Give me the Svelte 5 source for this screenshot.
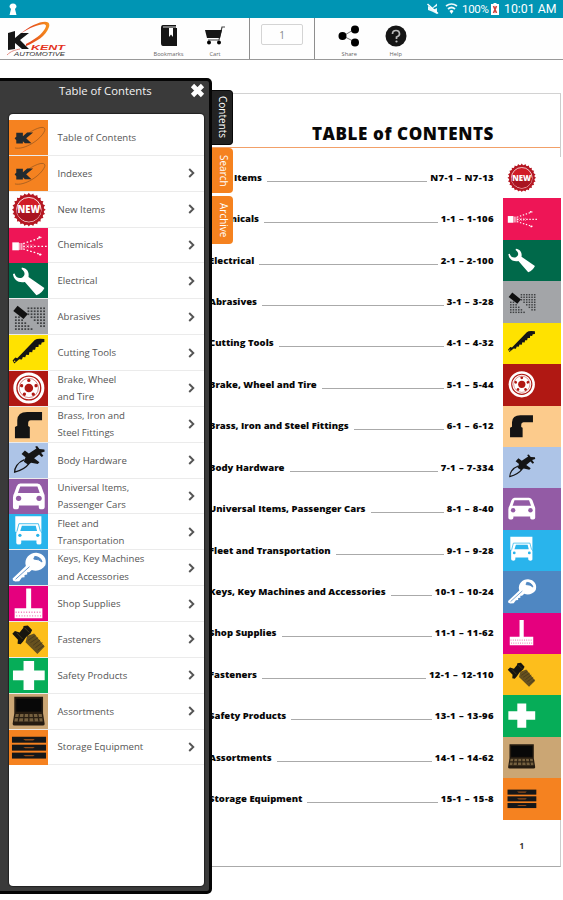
<script>
  const sections = [
    { icon: 'kent', color: '#f58220', menu: ['Table of Contents'] },
    { icon: 'kent', color: '#f58220', menu: ['Indexes'] },
    { icon: 'new', color: '#ffffff', menu: ['New Items'], title: 'New Items', pages: 'N7-1 – N7-13' },
    { icon: 'spray', color: '#ee1556', menu: ['Chemicals'], title: 'Chemicals', pages: '1-1 – 1-106' },
    { icon: 'wrench', color: '#00694a', menu: ['Electrical'], title: 'Electrical', pages: '2-1 – 2-100' },
    { icon: 'abrasive', color: '#a3a5a8', menu: ['Abrasives'], title: 'Abrasives', pages: '3-1 – 3-28' },
    { icon: 'saw', color: '#ffe200', menu: ['Cutting Tools'], title: 'Cutting Tools', pages: '4-1 – 4-32' },
    { icon: 'wheel', color: '#b01813', menu: ['Brake, Wheel', 'and Tire'], title: 'Brake, Wheel and Tire', pages: '5-1 – 5-44' },
    { icon: 'pipe', color: '#fccb8c', menu: ['Brass, Iron and', 'Steel Fittings'], title: 'Brass, Iron and Steel Fittings', pages: '6-1 – 6-12' },
    { icon: 'clip', color: '#adc4e7', menu: ['Body Hardware'], title: 'Body Hardware', pages: '7-1 – 7-334' },
    { icon: 'car', color: '#935ba5', menu: ['Universal Items,', 'Passenger Cars'], title: 'Universal Items, Passenger Cars', pages: '8-1 – 8-40' },
    { icon: 'truck', color: '#29b4ec', menu: ['Fleet and', 'Transportation'], title: 'Fleet and Transportation', pages: '9-1 – 9-28' },
    { icon: 'key', color: '#4f87c2', menu: ['Keys, Key Machines', 'and Accessories'], title: 'Keys, Key Machines and Accessories', pages: '10-1 – 10-24' },
    { icon: 'broom', color: '#e5007e', menu: ['Shop Supplies'], title: 'Shop Supplies', pages: '11-1 – 11-62' },
    { icon: 'bolt', color: '#fdbe1c', menu: ['Fasteners'], title: 'Fasteners', pages: '12-1 – 12-110' },
    { icon: 'cross', color: '#06ad58', menu: ['Safety Products'], title: 'Safety Products', pages: '13-1 – 13-96' },
    { icon: 'case', color: '#cba674', menu: ['Assortments'], title: 'Assortments', pages: '14-1 – 14-62' },
    { icon: 'drawers', color: '#f58220', menu: ['Storage Equipment'], title: 'Storage Equipment', pages: '15-1 – 15-8' }
  ];
  const chapters = sections.filter((s) => s.title);
  const teeth = Array.from({ length: 24 }, (_, i) => i * 15);
  // Grit pattern: two dotted corners around the diagonal block
  const dots = [];
  for (let r = 0; r < 8; r++) {
    for (let c = 0; c < 10; c++) {
      const upper = c >= 4 && c - r >= 2 && r < 7;
      const lower = r >= 3 && c <= r - 2;
      if (upper || lower) dots.push([18 + c * 9.5, 25 + r * 9]);
    }
  }
</script>

{#snippet glyph(name)}
  <svg class="glyph" viewBox="0 0 118 105" aria-hidden="true">
    {#if name === 'kent'}
      <path d="M18 84C46 91 96 60 108 32C113 15 85 19 47 48" fill="none" stroke="#8a5220" stroke-width="2" />
      <path d="M22 38H42V49L55 37H73L52 55L68 70H48L42 64V71H22V61L17 55L22 50Z" fill="#222b30" />
    {:else if name === 'new'}
      {#each teeth as t}
        <path d="M54 10L60 2L66 10Z" transform="rotate({t} 60 53)" fill="#b51722" />
      {/each}
      <circle cx="60" cy="53" r="46" fill="#b51722" />
      <circle cx="60" cy="53" r="37" fill="#d11c27" stroke="#fff" stroke-width="2.6" />
      <path d="M23 53H97A37 36 0 0 1 23 53" fill="#a91420" />
      <text x="60" y="64" text-anchor="middle" textLength="68" lengthAdjust="spacingAndGlyphs" class="newtext">NEW</text>
    {:else if name === 'spray'}
      <path d="M10 43H30V67H10Z" fill="#fff" />
      <path d="M33 45V66M39 45V66" stroke="#fff" stroke-width="3" />
      <path d="M43 47L98 28M43 55H114M43 63L98 80" fill="none" stroke="#fff" stroke-width="4" stroke-dasharray="5 6" />
      <path d="M43 51H78M43 59H78" stroke="#ffb6c9" stroke-width="2" stroke-dasharray="4 3" />
      <circle cx="92" cy="28" r="3.4" fill="#fff" /><circle cx="94" cy="80" r="3.4" fill="#fff" />
    {:else if name === 'wrench'}
      <path d="M39 13C54 15 62 26 59 42L107 75Q100 91 83 97L48 57C29 61 14 51 12 33L17 31C20 43 29 47 39 44C49 39 51 28 38 18Z" fill="#fff" />
    {:else if name === 'abrasive'}
      {#each dots as [x, y]}
        <rect {x} {y} width="5.4" height="5.2" fill="#3f4143" />
      {/each}
      <path d="M26 20L57 45L44 60L13 36Z" fill="#111" />
    {:else if name === 'saw'}
      <path d="M11 77L19 68L25 70L78 15Q85 9 107 12V21L99 22L97 29L90 28L89 36L81 36L79 44L72 44L70 52L62 51L60 60L52 59L49 67L42 66L39 74L31 73L16 86Z" fill="#151515" />
      <circle cx="17" cy="79" r="2.5" fill="#ffe200" />
    {:else if name === 'wheel'}
      <circle cx="60" cy="51" r="47" fill="#fff" />
      <circle cx="60" cy="51" r="36" fill="none" stroke="#b01813" stroke-width="4" />
      <circle cx="60" cy="51" r="29" fill="none" stroke="#b01813" stroke-width="1.5" />
      <circle cx="60" cy="51" r="13" fill="#b01813" />
      {#each [0, 72, 144, 216, 288] as a}
        <circle cx="60" cy="28" r="5" fill="#b01813" transform="rotate({a} 60 51)" />
      {/each}
    {:else if name === 'pipe'}
      <path d="M18 94V60L25 56V40Q26 15 55 15H100V40H66Q58 40 58 49V57L63 60V94Z" fill="#141414" />
    {:else if name === 'clip'}
      <path d="M47 50C25 58 17 76 17 88C31 84 51 75 61 61" fill="none" stroke="#151515" stroke-width="4" />
      <path d="M38 33L48 22L60 31L83 16L79 11L85 9L92 18L107 19L108 25L97 29L104 38L99 42L91 34L76 46L92 58L87 63L67 59L58 65L45 56L50 43Z" fill="#151515" />
    {:else if name === 'car'}
      <path fill-rule="evenodd" d="M34 13H86Q94 13 98 22L105 42Q109 48 108 56V85Q108 91 101 91H96Q90 91 90 85V80H30V85Q30 91 24 91H18Q12 91 12 85V56Q12 48 16 42L23 22Q27 13 34 13ZM34 22L27 42H93L86 22Z" fill="#fff" />
      <circle cx="29" cy="58" r="8" fill="#935ba5" /><circle cx="91" cy="58" r="8" fill="#935ba5" />
    {:else if name === 'truck'}
      <path d="M19 6H98V53H88L83 34H36L31 53H19Z" fill="#fff" />
      <path d="M34 29H86L93 50L98 56V88Q98 92 91 92Q83 92 83 87V80H37V87Q37 92 30 92Q22 92 22 87V56L27 50Z" fill="#fff" />
      <path d="M30 29H89L95 52M30 29L24 52" fill="none" stroke="#29b4ec" stroke-width="2.6" />
      <path d="M39 35H81L85 51H34Z" fill="#29b4ec" />
      <circle cx="33" cy="64" r="5" fill="#29b4ec" /><circle cx="87" cy="64" r="5" fill="#29b4ec" />
    {:else if name === 'key'}
      <path d="M11 86L51 48C44 24 64 7 83 8C104 10 116 26 110 46C101 60 84 66 69 60L61 67L55 67L55 74L47 75L47 82L39 83L31 94L19 95L12 92Z" fill="#fff" />
      <path d="M78 19Q96 20 100 36Q91 27 75 27Z" fill="#4f87c2" stroke="#4f87c2" stroke-width="3" />
      <path d="M20 88L62 50" stroke="#4f87c2" stroke-width="2.6" />
    {:else if name === 'broom'}
      <path d="M52 7H67V67H101V97H17V67H52Z" fill="#fff" />
      <path d="M20 79H99M22 90H99" stroke="#f272b5" stroke-width="4" stroke-dasharray="3 5" />
    {:else if name === 'bolt'}
      <path d="M55 42L76 34L108 74L86 96L50 61Z" fill="#66511f" />
      <path d="M58 55L80 40M65 62L88 47M73 70L94 54M80 77L101 62M87 85L105 71" stroke="#4a3b1b" stroke-width="3" />
      <path d="M10 35L18 27L32 31L43 18L44 12L57 10L70 24L65 34L52 45L42 59L35 67L26 65L27 53Z" fill="#17150f" />
      <path d="M24 33L41 51M47 17L61 31" stroke="#5e4d20" stroke-width="2" />
    {:else if name === 'cross'}
      <path d="M44 9H76V37H108V67H76V96H44V67H12V37H44Z" fill="#fff" />
    {:else if name === 'case'}
      <path d="M16 8H103V58L108 90Q108 95 102 95H17Q11 95 11 90L16 58Z" fill="#251b10" />
      <path d="M22 14H98V53H22Z" fill="#080808" />
      <path d="M20 60H99L102 83H16Z" fill="#75603f" />
      <path d="M32 60L28 83M46 60L44 83M60 60V83M73 60L76 83M87 60L91 83M18 71H101" stroke="#2b2013" stroke-width="4" />
    {:else}
      {#each [20, 44, 68] as y}
        <rect x="9" {y} width="103" height="18" fill="#151719" />
        <path d="M43 {y + 7}H78L73 {y + 11}H49Z" fill="#8f4c1b" />
      {/each}
    {/if}
  </svg>
{/snippet}

<div class="app">
  <header class="status">
    <svg class="keyhole" viewBox="0 0 10 14"><path d="M1.500 5A3.500 3.500 0 1 1 8.500 5L7 7L8.500 13H1.500L3 7Z" fill="#fff" /></svg>
    <div class="indicators">
      <svg width="12" height="12" viewBox="0 0 12 12"><path d="M1 3L5 5L10 0.500V11L5 8.500L1 7Z" fill="#e8f7fa" /><path d="M6 6L12 3" stroke="#0095b4" stroke-width="1.600" /><path d="M0.500 1L11 10.500" stroke="#fff" stroke-width="1.400" /></svg>
      <svg class="wifi" width="13" height="12" viewBox="0 0 13 12"><path d="M1 3Q6.500 -1 12 3M3 6Q6.500 3 10 6" fill="none" stroke="#eefafc" stroke-width="1.700" /><path d="M4.500 8Q6.500 6 8.500 8L6.500 11Z" fill="#fff" /></svg>
      <span class="percent">100%</span>
      <svg class="battery" width="8" height="12" viewBox="0 0 8 12"><path d="M2.500 0H5.500V1H8V12H0V1H2.500Z" fill="#fff" /><path d="M2.500 3L5.500 10M5.500 3L2.500 10" stroke="#cf433e" stroke-width="1.600" /></svg>
      <span class="clock">10:01 AM</span>
    </div>
  </header>

  <nav class="toolbar">
    <div class="brand">
      <svg width="62" height="38" viewBox="0 0 62 38">
        <defs><linearGradient id="swoosh"><stop offset="0" stop-color="#d9241c" /><stop offset="1" stop-color="#f7941d" /></linearGradient></defs>
        <path d="M20 24C32 18 39 11 40 6C40 2 28 5 14 14C28 2 46 -3 43 7C40 16 30 22 20 26Z" fill="url(#swoosh)" />
        <path d="M1 35C5 31 9 30 14 29" fill="none" stroke="#e58a80" stroke-width="1" />
        <path d="M2 13L9 11V18L15 13H23L14 20L23 29H16L9 23V29L2 30Z" fill="#161616" />
        <text x="25" y="29.500" textLength="34" lengthAdjust="spacingAndGlyphs" class="kent">KENT</text>
        <text x="8" y="36" textLength="51" lengthAdjust="spacingAndGlyphs" class="auto">AUTOMOTIVE</text>
      </svg>
    </div>
    <div class="tools left-tools">
      <div class="tool bookmarks">
        <svg width="18" height="22" viewBox="0 0 18 22"><path d="M3 0H16V3H17V21H3Q1 21 1 18V3Q1 0 3 0Z" fill="#151515" /><path d="M9 3H13V12L11 9.500L9 12Z" fill="#fff" /><path d="M3 2H16" stroke="#ddd" /></svg>
        <span>Bookmarks</span>
      </div>
      <div class="tool cart">
        <svg width="22" height="22" viewBox="0 0 22 22"><path d="M21 2H18L15 15H4" fill="none" stroke="#444" stroke-width="1.200" /><path d="M1 5H18L16 13H3Z" fill="#161616" /><circle cx="5" cy="17.500" r="2" /><circle cx="15" cy="17.500" r="2" /></svg>
        <span>Cart</span>
      </div>
    </div>
    <div class="pager"><div class="page-input">1</div></div>
    <div class="tools right-tools">
      <div class="tool share">
        <svg width="22" height="22" viewBox="0 0 22 22"><path d="M17 4L5 11L17 17" fill="none" stroke="#777" /><circle cx="17" cy="4.500" r="4" /><circle cx="4.500" cy="11" r="4" /><circle cx="17" cy="17.500" r="4" /></svg>
        <span>Share</span>
      </div>
      <div class="tool help">
        <svg width="22" height="22" viewBox="0 0 22 22"><circle cx="11" cy="11" r="10.500" fill="#161616" /><path d="M7.500 9Q7.500 5.500 11 5.500T14.500 9Q14.500 11 11.500 12V14" fill="none" stroke="#bbb" stroke-width="1.700" /><circle cx="11.500" cy="16.500" r="1.100" fill="#bbb" /></svg>
        <span>Help</span>
      </div>
    </div>
  </nav>

  <main class="viewer">
    <article class="sheet">
      <h1>TABLE of CONTENTS</h1>
      <div class="chapters">
        {#each chapters as s}
          <div class="chapter">
            <span class="title">{s.title}</span>
            <span class="leader"></span>
            <span class="pages">{s.pages}</span>
            <span class="tile" style:background={s.color}>{@render glyph(s.icon)}</span>
          </div>
        {/each}
      </div>
      <div class="folio">1</div>
    </article>

    <aside class="drawer">
      <div class="drawer-head">
        <span>Table of Contents</span>
        <svg width="15" height="15" viewBox="0 0 15 15"><path d="M2.500 2.500L12.500 12.500M12.500 2.500L2.500 12.500" stroke="#fff" stroke-width="4.600" /></svg>
      </div>
      <ul>
        {#each sections as s, i}
          <li>
            <span class="thumb" style:background={s.color}>{@render glyph(s.icon)}</span>
            <span class="label">{#each s.menu as line}<span>{line}</span>{/each}</span>
            {#if i > 0}
              <svg class="chevron" width="7" height="10" viewBox="0 0 7 10"><path d="M1.200 1L5.300 5L1.200 9" fill="none" stroke="#555" stroke-width="1.900" /></svg>
            {/if}
          </li>
        {/each}
      </ul>
    </aside>
    <div class="tabs">
      <div class="tab active">Contents</div>
      <div class="tab search">Search</div>
      <div class="tab archive">Archive</div>
    </div>
  </main>
</div>

<style>
  :global(body) { background: #fff; }
  .app { width: 563px; height: 900px; overflow: hidden; display: flex; flex-direction: column; font-family: "Open Sans", sans-serif; background: #fff; }
  .app * { box-sizing: border-box; }
  svg { display: block; flex: none; }
  span { white-space: nowrap; }
  .status { height: 18px; flex: none; background: #0095b4; display: flex; align-items: center; justify-content: space-between; padding: 0 6px 0 8px; color: #fff; }
  .keyhole { width: 10px; height: 14px; }
  .indicators { display: flex; align-items: center; font-family: Roboto, sans-serif; }
  .wifi { margin-left: 6px; }
  .percent { font-size: 11.5px; width: 28px; margin-left: 4px; letter-spacing: -0.3px; }
  .battery { margin-left: 1px; }
  .clock { font-size: 12.3px; width: 53px; margin-left: 5px; }
  .toolbar { height: 42px; flex: none; display: flex; border-bottom: 1px solid #999; background: #fefefe; }
  .brand { width: 145px; padding: 2px 0 0 6px; }
  .kent { font: italic bold 6.5px "Liberation Sans", sans-serif; fill: #e43322; }
  .auto { font: italic 400 5px "Liberation Sans", sans-serif; fill: #333; }
  .tools { display: flex; }
  .left-tools { width: 104px; }
  .tool { display: flex; flex-direction: column; align-items: center; padding-top: 7px; font-size: 5.7px; line-height: 8px; color: #666; gap: 3px; }
  .bookmarks { width: 47px; }
  .cart { width: 46px; }
  .pager { width: 66px; border: solid #8e8e8e; border-width: 0 1px; padding: 6px 0 0 11px; }
  .page-input { width: 42px; height: 21px; border: 1px solid #d4d4d4; border-radius: 2px; color: #888; font-size: 10px; line-height: 20px; text-align: center; }
  .right-tools { padding-left: 11px; }
  .share, .help { width: 46.5px; }
  .viewer { position: relative; flex: 1; padding: 33px 2px 0 190px; }
  .sheet { height: 774px; border: 1px solid #d2d2d2; border-bottom-color: #aaa; border-right: 1px solid #ccc; display: flex; flex-direction: column; color: #080808; }
  h1 { margin: 0; height: 54px; flex: none; border-bottom: 1px solid #f2a068; padding: 29px 66px 0 0; text-align: right; font-size: 17px; font-weight: 800; line-height: 22px; letter-spacing: 0.6px; white-space: nowrap; }
  .chapters { padding-top: 9px; }
  .chapter { height: 41.43px; display: flex; align-items: center; padding-left: 18px; margin-right: -1px; font-size: 9.5px; font-weight: 800; }
  .title, .pages { padding-bottom: 1px; }
  .leader { flex: 1; height: 1px; background: #aaa; margin: 7px 3px 0 5px; }
  .pages { padding-right: 9px; letter-spacing: 0.37px; }
  .tile { width: 58px; height: 100%; display: flex; align-items: center; padding: 0 0 1px 2px; flex: none; }
  .tile .glyph { width: 33px; height: 29.4px; }
  .folio { text-align: right; padding: 19px 36px 0 0; font-size: 8px; font-weight: 700; line-height: 14px; color: #333; }
  .drawer { position: absolute; left: 0; top: 18px; width: 212px; height: 816px; background: #3a3a3a; border: 3px solid #050505; border-left: 0; border-radius: 0 5px 5px 0; }
  .drawer-head { height: 33px; display: flex; align-items: flex-start; padding: 1px 4px 0 59px; justify-content: space-between; color: #f4f4f4; font-size: 11.3px; line-height: 18px; }
  .drawer-head svg { margin-top: 1px; }
  ul { list-style: none; margin: 0 0 0 9px; padding: 6px 0 0; width: 195px; height: 772px; background: #fff; border-radius: 4px; box-shadow: 0 0 1px 1px #222; }
  li { height: 35.87px; display: flex; align-items: center; border-bottom: 1px solid #ebebeb; }
  .thumb { width: 39px; height: 35px; overflow: hidden; flex: none; }
  .thumb .glyph { width: 39px; height: 35px; }
  .label { flex: 1; padding-left: 9.5px; display: flex; flex-direction: column; font-size: 9.6px; line-height: 17.3px; color: #555; }
  .chevron { margin-right: 9px; }
  .newtext { font: 800 30px "Open Sans", sans-serif; fill: #fff; }
  .tabs { position: absolute; left: 212px; top: 30px; display: flex; flex-direction: column; gap: 3px; }
  .tab { width: 21px; writing-mode: vertical-rl; color: #fff; font-size: 10px; line-height: 19px; text-align: center; background: #f5821f; border-radius: 0 4px 4px 0; }
  .active { height: 55px; background: #222; border: 1px solid #080808; border-left: 0; }
  .search { height: 45px; }
  .archive { height: 48px; }
</style>
